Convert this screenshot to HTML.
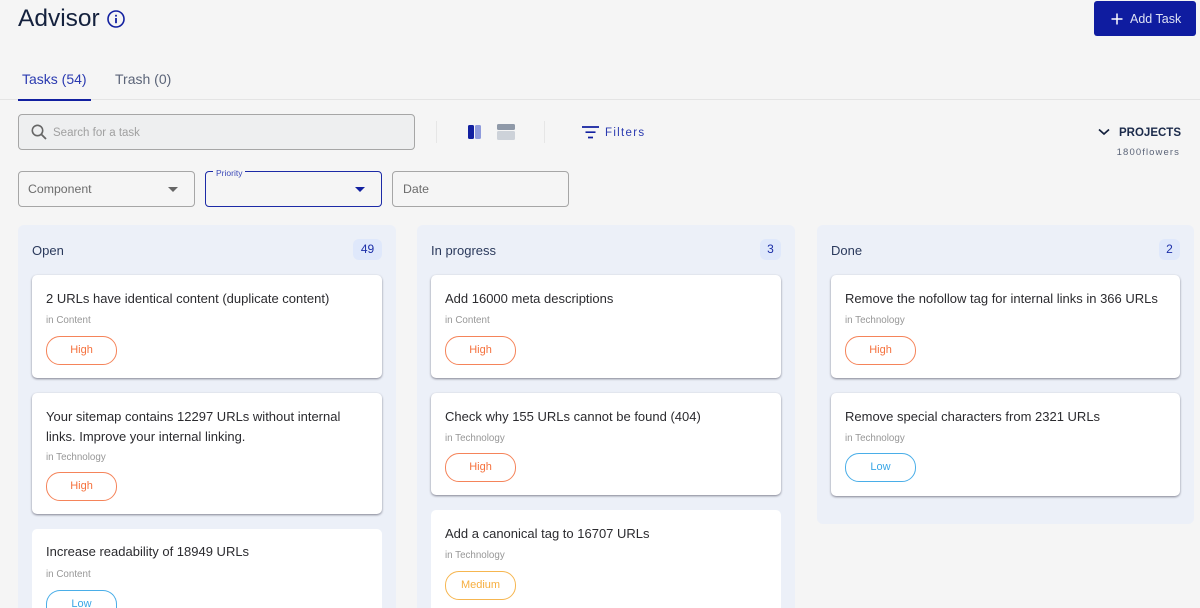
<!DOCTYPE html>
<html><head><meta charset="utf-8"><style>
html,body{margin:0;padding:0;width:1200px;height:608px;overflow:hidden}
body{background:#f5f5f5;font-family:"Liberation Sans",sans-serif}
#w{position:relative;width:1200px;height:608px;overflow:hidden;background:#f5f5f5}
.a,.col,.card,.t,.s,.p{position:absolute}
.a{white-space:nowrap}
.col{background:#ecf0f8;border-radius:6px}
.card{background:#fff;border-radius:5px;box-shadow:0 1px 2px rgba(40,40,60,.55)}
.cut{border-radius:5px 5px 0 0;box-shadow:none;overflow:hidden}
.t{left:14px;font-size:13px;line-height:20px;color:#2b2b2f;white-space:nowrap}
.s{left:14px;font-size:9.8px;line-height:12px;color:#979797;white-space:nowrap}
.p{left:14px;width:69px;height:27px;border:1px solid;border-radius:14px;font-size:11px;line-height:27px;text-align:center;background:#fff}
.h{color:#f5713d;border-color:#f5845a}.l{color:#3aa6e6;border-color:#4aaee8}.m{color:#f6ae3f;border-color:#f6b650}
.hd{font-size:13px;line-height:15px;color:#2b3a5c}
.b{background:#dfe8fb;color:#1c2fa8;border-radius:6px;font-size:12px;text-align:center;height:21px;line-height:20px}
.box{position:absolute;box-sizing:border-box;border:1px solid #a6a6a6;border-radius:4px;height:36px}
</style></head><body><div id="w">
<div class="a" style="left:18px;top:4px;font-size:24.5px;line-height:30px;color:#14213d">Advisor</div>
<svg class="a" style="left:107px;top:10px" width="18" height="18" viewBox="0 0 18 18"><circle cx="9" cy="9" r="8" fill="none" stroke="#1220a0" stroke-width="1.6"/><rect x="8.1" y="8" width="1.8" height="5.2" fill="#1220a0"/><rect x="8.1" y="4.8" width="1.8" height="1.8" fill="#1220a0"/></svg>
<div class="a" style="left:1094px;top:1px;width:102px;height:35px;background:#0f1ca0;border-radius:3px"></div>
<svg class="a" style="left:1110px;top:12px" width="14" height="14" viewBox="0 0 14 14"><path d="M7 1.5V12.5M1.5 7H12.5" stroke="#fff" stroke-width="1.5"/></svg>
<div class="a" style="left:1130px;top:11px;font-size:12.5px;line-height:16px;color:#dfe3f5">Add Task</div>

<div class="a" style="left:22px;top:70px;font-size:14px;line-height:18px;color:#2a3ab0">Tasks (54)</div>
<div class="a" style="left:115px;top:70px;font-size:14px;line-height:18px;color:#5b6478">Trash (0)</div>
<div class="a" style="left:0;top:99px;width:1200px;height:1px;background:#e4e4e4"></div>
<div class="a" style="left:18px;top:99px;width:73px;height:2px;background:#1220a0"></div>

<div class="box" style="left:18px;top:114px;width:397px;background:#eeeff0;height:36px"></div>
<svg class="a" style="left:30px;top:123px" width="18" height="18" viewBox="0 0 18 18"><circle cx="7.5" cy="7.5" r="5.2" fill="none" stroke="#666" stroke-width="1.6"/><path d="M11.5 11.5L16 16" stroke="#666" stroke-width="1.8"/></svg>
<div class="a" style="left:53px;top:125px;font-size:11.5px;line-height:16px;color:#a0a0a0">Search for a task</div>
<div class="a" style="left:436px;top:121px;width:1px;height:22px;background:#e6e6e6"></div>
<div class="a" style="left:544px;top:121px;width:1px;height:22px;background:#e6e6e6"></div>
<div class="a" style="left:468px;top:125px;width:6px;height:14px;background:#1220a0;border-radius:1.5px"></div>
<div class="a" style="left:475px;top:125px;width:6px;height:14px;background:#8f9bdc;border-radius:1.5px"></div>
<div class="a" style="left:497px;top:124px;width:18px;height:6px;background:#8f99a8;border-radius:1.5px"></div>
<div class="a" style="left:497px;top:131px;width:18px;height:9px;background:#cdd2d9;border-radius:1.5px"></div>
<svg class="a" style="left:582px;top:126px" width="17" height="13" viewBox="0 0 17 13"><path d="M0 1H17M3.5 6.2H13.5M6 11.5H11" stroke="#1220a0" stroke-width="1.7"/></svg>
<div class="a" style="left:605px;top:125px;font-size:11.5px;line-height:16px;letter-spacing:1.3px;color:#2a3ab0">Filters</div>
<svg class="a" style="left:1098px;top:127px" width="12" height="10" viewBox="0 0 12 10"><path d="M1 2.5L6 7L11 2.5" fill="none" stroke="#14213d" stroke-width="1.7"/></svg>
<div class="a" style="left:1119px;top:125px;font-size:11.5px;line-height:16px;font-weight:bold;color:#1b2a4a">PROJECTS</div>
<div class="a" style="right:20px;top:147px;font-size:9.5px;line-height:12px;letter-spacing:1.1px;color:#5b6478">1800flowers</div>

<div class="box" style="left:18px;top:171px;width:177px"></div>
<div class="a" style="left:28px;top:181px;font-size:12.3px;line-height:16px;color:#6c6c6c">Component</div>
<div class="a" style="left:168px;top:187px;border:5px solid transparent;border-top-color:#666;border-bottom:0"></div>
<div class="box" style="left:205px;top:171px;width:177px;border-color:#1c2aa6"></div>
<div class="a" style="left:213px;top:168px;padding:0 3px;background:#f5f5f5;font-size:8.5px;line-height:10px;color:#3a48b8">Priority</div>
<div class="a" style="left:355px;top:187px;border:5px solid transparent;border-top-color:#1220a0;border-bottom:0"></div>
<div class="box" style="left:392px;top:171px;width:177px"></div>
<div class="a" style="left:403px;top:181px;font-size:12.3px;line-height:16px;color:#6c6c6c">Date</div>

<div class="col" style="left:18px;top:225px;width:378px;height:383px;border-radius:6px 6px 0 0"></div>
<div class="col" style="left:417px;top:225px;width:378px;height:383px;border-radius:6px 6px 0 0"></div>
<div class="col" style="left:817px;top:225px;width:377px;height:299px"></div>
<div class="a hd" style="left:32px;top:243px">Open</div>
<div class="a b" style="left:353px;top:239px;width:29px">49</div>
<div class="a hd" style="left:431px;top:243px">In progress</div>
<div class="a b" style="left:760px;top:239px;width:21px">3</div>
<div class="a hd" style="left:831px;top:243px">Done</div>
<div class="a b" style="left:1159px;top:239px;width:21px">2</div>

<div class="card" style="left:32px;top:275px;width:350px;height:103px"><div class="t" style="top:14px">2 URLs have identical content (duplicate content)</div><div class="s" style="top:40px">in Content</div><div class="p h" style="top:61px">High</div></div>
<div class="card" style="left:32px;top:393px;width:350px;height:121px"><div class="t" style="top:14px">Your sitemap contains 12297 URLs without internal<br>links. Improve your internal linking.</div><div class="s" style="top:59px">in Technology</div><div class="p h" style="top:79px">High</div></div>
<div class="card cut" style="left:32px;top:529px;width:350px;height:79px"><div class="t" style="top:13px">Increase readability of 18949 URLs</div><div class="s" style="top:40px">in Content</div><div class="p l" style="top:61px;height:17px;border-bottom:0;border-radius:14px 14px 0 0">Low</div></div>

<div class="card" style="left:431px;top:275px;width:350px;height:103px"><div class="t" style="top:14px">Add 16000 meta descriptions</div><div class="s" style="top:40px">in Content</div><div class="p h" style="top:61px">High</div></div>
<div class="card" style="left:431px;top:393px;width:350px;height:102px"><div class="t" style="top:14px">Check why 155 URLs cannot be found (404)</div><div class="s" style="top:40px">in Technology</div><div class="p h" style="top:60px">High</div></div>
<div class="card cut" style="left:431px;top:510px;width:350px;height:98px"><div class="t" style="top:14px">Add a canonical tag to 16707 URLs</div><div class="s" style="top:40px">in Technology</div><div class="p m" style="top:61px">Medium</div></div>

<div class="card" style="left:831px;top:275px;width:349px;height:103px"><div class="t" style="top:14px">Remove the nofollow tag for internal links in 366 URLs</div><div class="s" style="top:40px">in Technology</div><div class="p h" style="top:61px">High</div></div>
<div class="card" style="left:831px;top:393px;width:349px;height:103px"><div class="t" style="top:14px">Remove special characters from 2321 URLs</div><div class="s" style="top:40px">in Technology</div><div class="p l" style="top:60px">Low</div></div>
</div></body></html>
